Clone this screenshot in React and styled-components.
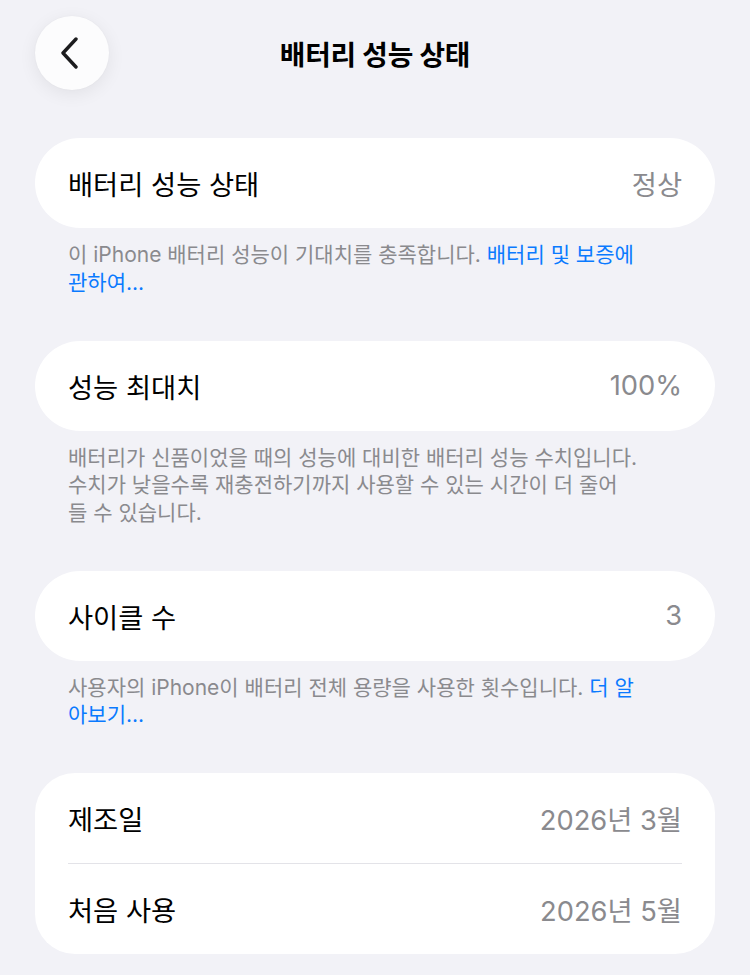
import styled, { createGlobalStyle } from 'styled-components';

const GlobalStyle = createGlobalStyle`
  html, body {
    margin: 0;
    padding: 0;
    background: #f2f2f7;
  }

  body {
    font-family: Inter, "Noto Sans CJK KR", sans-serif;
    -webkit-font-smoothing: antialiased;
  }
`;

const Page = styled.main`
  min-height: 975px;
  box-sizing: border-box;
  padding: 16px 35px 0;
  background: #f2f2f7;
`;

const Header = styled.header`
  display: grid;
  grid-template-columns: 1fr auto 1fr;
  align-items: center;
  margin-bottom: 48px;
`;

const BackButton = styled.button`
  width: 74px;
  height: 74px;
  border: none;
  border-radius: 50%;
  background: #fcfcfd;
  box-shadow: 0 4px 18px rgba(0, 0, 0, 0.07), 0 0 2px rgba(0, 0, 0, 0.04);
  display: flex;
  align-items: center;
  justify-content: center;
  padding: 0 4px 0 0;
  cursor: pointer;
`;

const Title = styled.h1`
  margin: 0;
  font-size: 27.8px;
  font-weight: 700;
  color: #000;
  letter-spacing: -0.2px;
`;

const Section = styled.section`
  margin-bottom: ${(props) => props.$last ? '0' : '44.5px'};
`;

const Card = styled.div`
  background: #fff;
  border-radius: ${(props) => props.$radius || '45px'};
  overflow: hidden;
`;

const Row = styled.div`
  height: 90px;
  padding: 0 33px;
  display: flex;
  align-items: center;
  justify-content: space-between;
  font-size: 27.3px;
`;

const Label = styled.span`
  color: #000;
`;

const Value = styled.span`
  color: #8a8a8e;
`;

const Divider = styled.hr`
  margin: 0 33px;
  border: none;
  height: 1px;
  background: #e3e3e8;
`;

const Footer = styled.p`
  margin: 0;
  padding: 13px 33px 0;
  font-size: 21px;
  line-height: 27.5px;
  color: #8a8a8e;
  white-space: nowrap;
`;

const Link = styled.a`
  color: #0a7aff;
  text-decoration: none;
`;

function Chevron() {
  return (
    <svg width="20" height="32" viewBox="0 0 20 32" fill="none">
      <path
        d="M16 2 L3 16 L16 30"
        stroke="#1c1c1e"
        strokeWidth="3.4"
        strokeLinecap="round"
        strokeLinejoin="round"
      />
    </svg>
  );
}

export default function App() {
  return (
    <>
      <GlobalStyle />
      <Page>
        <Header>
          <div>
            <BackButton type="button" aria-label="뒤로">
              <Chevron />
            </BackButton>
          </div>
          <Title>배터리 성능 상태</Title>
          <div />
        </Header>

        <Section>
          <Card>
            <Row>
              <Label>배터리 성능 상태</Label>
              <Value>정상</Value>
            </Row>
          </Card>
          <Footer>
            이 iPhone 배터리 성능이 기대치를 충족합니다.
            {' '}
            <Link href="#">
              배터리 및 보증에
              <br />
              관하여...
            </Link>
          </Footer>
        </Section>

        <Section>
          <Card>
            <Row>
              <Label>성능 최대치</Label>
              <Value>100%</Value>
            </Row>
          </Card>
          <Footer>
            배터리가 신품이었을 때의 성능에 대비한 배터리 성능 수치입니다.
            <br />
            수치가 낮을수록 재충전하기까지 사용할 수 있는 시간이 더 줄어
            <br />
            들 수 있습니다.
          </Footer>
        </Section>

        <Section>
          <Card>
            <Row>
              <Label>사이클 수</Label>
              <Value>3</Value>
            </Row>
          </Card>
          <Footer>
            사용자의 iPhone이 배터리 전체 용량을 사용한 횟수입니다.
            {' '}
            <Link href="#">
              더 알
              <br />
              아보기...
            </Link>
          </Footer>
        </Section>

        <Section $last>
          <Card $radius="40px">
            <Row>
              <Label>제조일</Label>
              <Value>2026년 3월</Value>
            </Row>
            <Divider />
            <Row>
              <Label>처음 사용</Label>
              <Value>2026년 5월</Value>
            </Row>
          </Card>
        </Section>
      </Page>
    </>
  );
}
